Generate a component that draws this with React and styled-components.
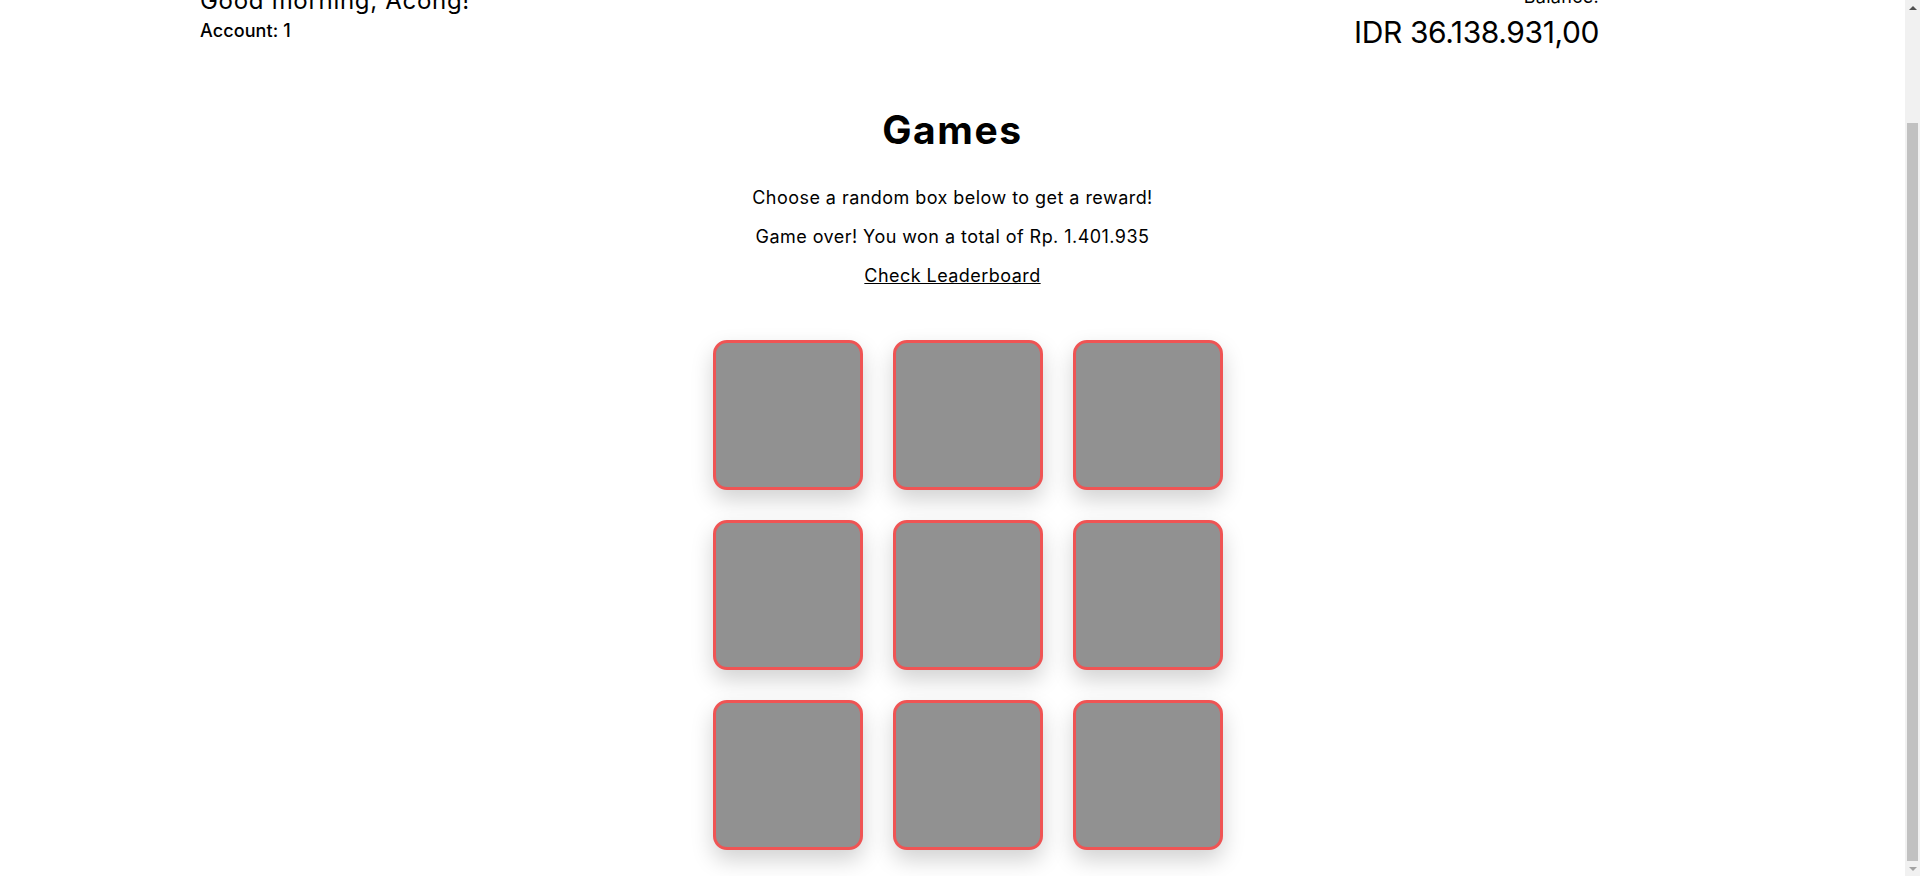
import React, { useLayoutEffect, useEffect } from "react";
import styled, { createGlobalStyle } from "styled-components";

const GlobalStyle = createGlobalStyle`
  html, body {
    margin: 0;
    padding: 0;
    background: #ffffff;
  }
  body {
    font-family: Inter, "Open Sans", "Liberation Sans", sans-serif;
    color: #000000;
  }
  * { box-sizing: border-box; }
`;

const Page = styled.div`
  margin-right: 15px;
  padding: 113px 0 26px;
`;

const Header = styled.header`
  display: flex;
  justify-content: space-between;
  align-items: flex-start;
  padding: 0 306px 0 200px;
`;

const Greeting = styled.div`
  display: flex;
  flex-direction: column;
`;

const Hello = styled.div`
  font-size: 24px;
  line-height: 30px;
  font-weight: 400;
  letter-spacing: 0.7px;
`;

const Account = styled.div`
  font-size: 18px;
  line-height: 29px;
  font-weight: 500;
  letter-spacing: 0.1px;
`;

const BalanceBox = styled.div`
  display: flex;
  flex-direction: column;
  align-items: flex-end;
`;

const BalanceLabel = styled.div`
  font-size: 18px;
  line-height: 22px;
  letter-spacing: 0.3px;
`;

const BalanceValue = styled.div`
  font-size: 30px;
  line-height: 48px;
  font-weight: 400;
  letter-spacing: -0.4px;
`;

const Main = styled.main`
  display: flex;
  flex-direction: column;
  align-items: center;
  margin-top: 50px;
`;

const Title = styled.h1`
  margin: 0 0 33px;
  font-size: 39px;
  line-height: 48px;
  font-weight: 700;
  letter-spacing: 1.6px;
  color: #000;
`;

const Text = styled.p`
  margin: 0 0 17px;
  font-size: 18px;
  line-height: 22px;
  letter-spacing: 0.45px;
  text-align: center;
`;

const Link = styled.a`
  color: #000000;
  text-decoration: underline;
  cursor: pointer;
`;

const Board = styled.div`
  display: grid;
  grid-template-columns: repeat(3, 150px);
  gap: 30px;
  margin-top: 36px;
  padding-left: 31px;
`;

const Box = styled.button`
  width: 150px;
  height: 150px;
  padding: 0;
  background: #919191;
  border: 3px solid #ef5454;
  border-radius: 14px;
  box-shadow: 0 10px 22px rgba(0, 0, 0, 0.18);
  cursor: pointer;
`;

/* Decorative window scrollbar, pinned over the right edge */
const ScrollBar = styled.div`
  position: fixed;
  top: 0;
  right: 0;
  width: 15px;
  height: 100vh;
  background: #f1f1f1;
  display: flex;
  flex-direction: column;
  align-items: center;
`;

const Arrow = styled.div`
  height: 15px;
  width: 15px;
  display: flex;
  align-items: center;
  justify-content: center;
  flex: none;

  &::before {
    content: "";
    width: 0;
    height: 0;
    border-left: 4px solid transparent;
    border-right: 4px solid transparent;
    ${(p) =>
      p.$down
        ? `border-top: 4px solid #a3a3a3;`
        : `border-bottom: 4px solid #505050;`}
  }
`;

const Track = styled.div`
  flex: 1;
  width: 100%;
  display: flex;
  flex-direction: column;
  padding: 108px 2px 0;
`;

const Thumb = styled.div`
  flex: 1;
  background: #c1c1c1;
`;

export default function App() {
  useLayoutEffect(() => {
    window.scrollTo(0, document.documentElement.scrollHeight);
  }, []);
  useEffect(() => {
    const t = setTimeout(() => window.scrollTo(0, document.documentElement.scrollHeight), 0);
    return () => clearTimeout(t);
  }, []);

  return (
    <>
      <GlobalStyle />
      <Page>
        <Header>
          <Greeting>
            <Hello>Good morning, Acong!</Hello>
            <Account>Account: 1</Account>
          </Greeting>
          <BalanceBox>
            <BalanceLabel>Balance:</BalanceLabel>
            <BalanceValue>IDR 36.138.931,00</BalanceValue>
          </BalanceBox>
        </Header>
        <Main>
          <Title>Games</Title>
          <Text>Choose a random box below to get a reward!</Text>
          <Text>Game over! You won a total of Rp. 1.401.935</Text>
          <Text>
            <Link>Check Leaderboard</Link>
          </Text>
          <Board>
            {Array.from({ length: 9 }).map((_, i) => (
              <Box key={i} aria-label={`Box ${i + 1}`} />
            ))}
          </Board>
        </Main>
      </Page>
      <ScrollBar aria-hidden="true">
        <Arrow />
        <Track>
          <Thumb />
        </Track>
        <Arrow $down />
      </ScrollBar>
    </>
  );
}
